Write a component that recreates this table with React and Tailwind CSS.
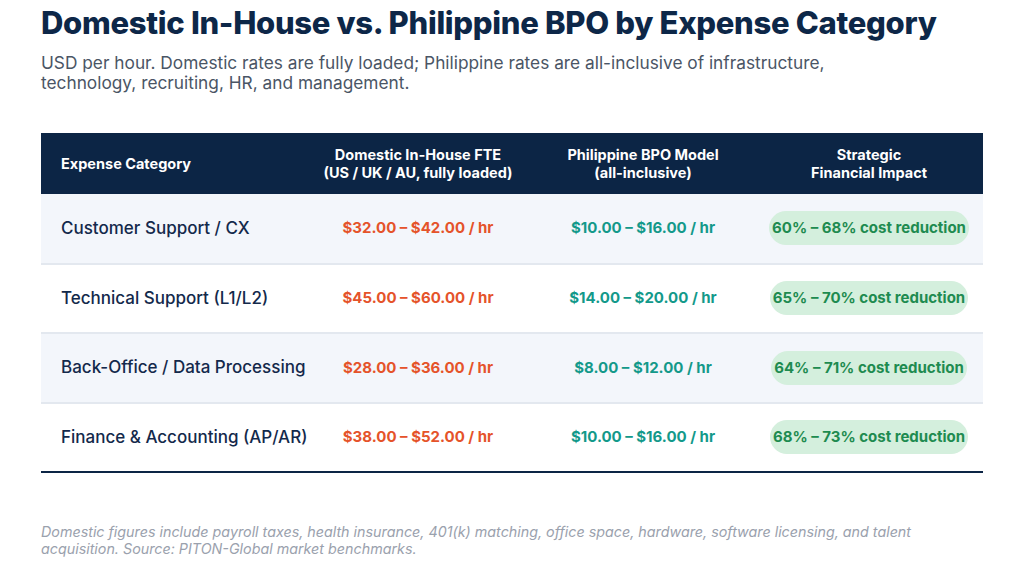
import React from "react";

const rows = [
  { cat: "Customer Support / CX", dom: "$32.00 – $42.00 / hr", ph: "$10.00 – $16.00 / hr", impact: "60% – 68% cost reduction" },
  { cat: "Technical Support (L1/L2)", dom: "$45.00 – $60.00 / hr", ph: "$14.00 – $20.00 / hr", impact: "65% – 70% cost reduction" },
  { cat: "Back-Office / Data Processing", dom: "$28.00 – $36.00 / hr", ph: "$8.00 – $12.00 / hr", impact: "64% – 71% cost reduction" },
  { cat: "Finance & Accounting (AP/AR)", dom: "$38.00 – $52.00 / hr", ph: "$10.00 – $16.00 / hr", impact: "68% – 73% cost reduction" },
];

const App = () => {
  return (
    <div
      className="w-[1024px] h-[580px] bg-white px-[41px] pt-[3px] overflow-hidden"
      style={{ fontFamily: "Inter, 'Open Sans', sans-serif" }}
    >
      {/* Heading */}
      <h1 className="text-[31px] leading-[40px] font-extrabold text-[#0d2748] tracking-[-0.3px]">
        Domestic In-House vs. Philippine BPO by Expense Category
      </h1>
      <p className="mt-[10px] text-[17.3px] leading-[20px] text-[#4a5565] w-[810px]">
        USD per hour. Domestic rates are fully loaded; Philippine rates are all-inclusive of infrastructure,
        technology, recruiting, HR, and management.
      </p>

      {/* Table */}
      <table className="mt-[40px] w-[942px] border-collapse table-fixed">
        <colgroup>
          <col className="w-[264px]" />
          <col className="w-[226px]" />
          <col className="w-[224px]" />
          <col className="w-[228px]" />
        </colgroup>
        <thead>
          <tr className="bg-[#0c2545] text-white text-[14.5px] leading-[18px] font-bold h-[61px]">
            <th className="text-left pl-[20px]">Expense Category</th>
            <th className="text-center">
              Domestic In-House FTE
              <br />
              (US / UK / AU, fully loaded)
            </th>
            <th className="text-center">
              Philippine BPO Model
              <br />
              (all-inclusive)
            </th>
            <th className="text-center">
              Strategic
              <br />
              Financial Impact
            </th>
          </tr>
        </thead>
        <tbody>
          {rows.map((r, i) => (
            <tr
              key={r.cat}
              className={`h-[69.5px] ${i % 2 === 0 ? "bg-[#f3f6fb]" : "bg-white"} ${
                i === rows.length - 1 ? "border-b-2 border-[#0c2545]" : "border-b-2 border-[#e3e8ef]"
              }`}
            >
              <td className="pl-[20px] text-[17px] font-medium text-[#13294b] whitespace-nowrap">{r.cat}</td>
              <td className="text-center text-[15px] font-bold text-[#e5532a] whitespace-nowrap">{r.dom}</td>
              <td className="text-center text-[15px] font-bold text-[#13998a] whitespace-nowrap">{r.ph}</td>
              <td className="text-center">
                <span className="inline-block whitespace-nowrap rounded-full bg-[#d4efdd] px-[3px] py-[7px] text-[15px] leading-[20px] font-bold text-[#1e8b50]">
                  {r.impact}
                </span>
              </td>
            </tr>
          ))}
        </tbody>
      </table>

      {/* Footnote */}
      <p className="mt-[50px] text-[14.3px] leading-[17px] italic text-[#9aa1ad] w-[890px]">
        Domestic figures include payroll taxes, health insurance, 401(k) matching, office space, hardware, software
        licensing, and talent acquisition. Source: PITON-Global market benchmarks.
      </p>
    </div>
  );
};

export default App;
